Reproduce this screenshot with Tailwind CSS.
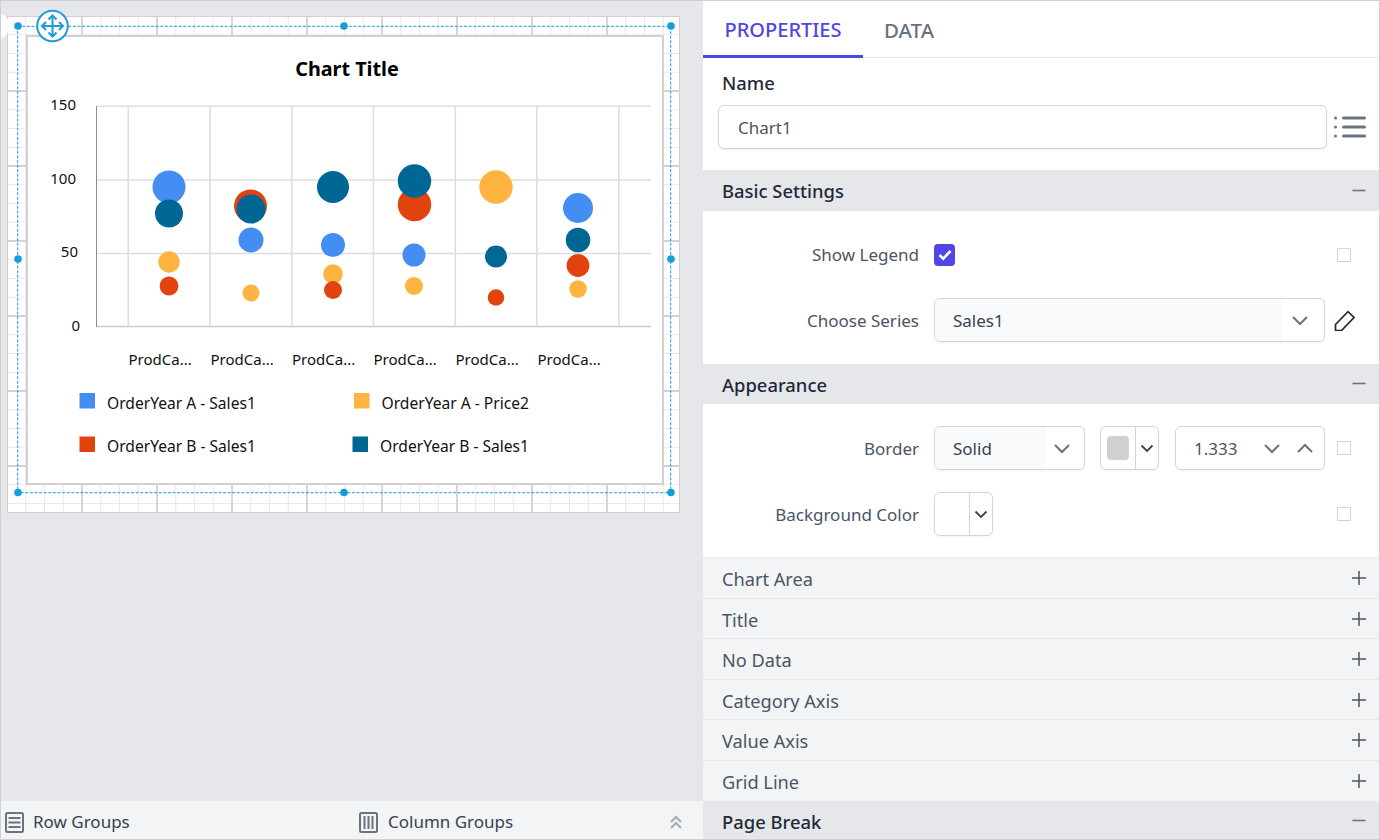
<!DOCTYPE html>
<html lang="en">
<head>
  <meta charset="UTF-8">
  <title>Report Designer - Chart Properties</title>
  <script src="https://cdn.jsdelivr.net/npm/@tailwindcss/browser@4"></script>
</head>
<body class="font-['Noto_Sans',sans-serif] text-[17px] text-gray-800 overflow-hidden">
  <div class="flex w-[1380px] h-[840px] border border-[#cfcfcf] bg-white overflow-hidden">

    <!-- Design surface -->
    <div class="w-[702px] h-full flex flex-col bg-gray-200">
      <div class="flex-1 pt-[15px] pl-[6px]">
        <div class="relative w-[673px] h-[497px] bg-white">
          <svg class="absolute inset-0" width="673" height="497">
            <defs>
              <pattern id="grid" x="-1" y="-1" width="75" height="75" patternUnits="userSpaceOnUse">
                <path d="M19.75 0V75M38.5 0V75M57.25 0V75M0 19.75H75M0 38.5H75M0 57.25H75" stroke="#e9e9e9" stroke-width="1" fill="none"/>
                <path d="M1 0V75M0 1H75" stroke="#d2d2d2" stroke-width="1.8" fill="none"/>
              </pattern>
            </defs>
            <rect width="673" height="497" fill="url(#grid)"/>
            <rect x="0.5" y="0.5" width="672" height="496" fill="none" stroke="#d0d0d0"/>
          </svg>

          <!-- Chart -->
          <div class="absolute left-[19px] top-[19px] w-[638px] h-[450px] border-2 border-[#d1d1d1] bg-white"></div>
          <svg class="absolute inset-0 overflow-visible" width="673" height="497" viewBox="7 16 673 497">
            <g stroke="#dedede" stroke-width="1.6">
              <path d="M96 106.3H651M96 180H651M96 253.5H651"/>
              <path d="M128.3 106V326M210 106V326M291.8 106V326M373.4 106V326M455.3 106V326M536.8 106V326M618.8 106V326"/>
            </g>
            <path d="M96 326.5H651" stroke="#cccccc" stroke-width="1.6"/>
            <path d="M96.5 106V327" stroke="#8c8c8c" stroke-width="1"/>

            <g class="text-[15px]" fill="#111">
              <text x="76" y="110" text-anchor="end">150</text>
              <text x="76" y="184" text-anchor="end">100</text>
              <text x="78" y="257" text-anchor="end">50</text>
              <text x="80" y="331" text-anchor="end">0</text>
            </g>
            <text x="347" y="75.5" text-anchor="middle" class="text-[19.8px] font-bold" fill="#000">Chart Title</text>

            <g fill="#448df3">
              <circle cx="169" cy="187" r="16.5"/>
              <circle cx="251" cy="240" r="12.5"/>
              <circle cx="333" cy="245" r="12"/>
              <circle cx="414" cy="255" r="11.5"/>
              <circle cx="578" cy="208" r="15"/>
            </g>
            <g fill="#ffb340">
              <circle cx="169" cy="262" r="10.7"/>
              <circle cx="251" cy="293" r="8.5"/>
              <circle cx="333" cy="274" r="9.8"/>
              <circle cx="414" cy="286" r="9"/>
              <circle cx="496" cy="187" r="16.7"/>
              <circle cx="578" cy="289" r="8.7"/>
            </g>
            <g fill="#e2420d">
              <circle cx="169" cy="286" r="9.4"/>
              <circle cx="250.5" cy="206" r="16.5"/>
              <circle cx="333" cy="290" r="9"/>
              <circle cx="414.5" cy="204.5" r="16.7"/>
              <circle cx="496" cy="297.5" r="8.3"/>
              <circle cx="578" cy="265.5" r="11.4"/>
            </g>
            <g fill="#006795">
              <circle cx="169" cy="213.5" r="14"/>
              <circle cx="251" cy="209" r="14.5"/>
              <circle cx="333" cy="187" r="16"/>
              <circle cx="414.5" cy="181" r="16.7"/>
              <circle cx="496" cy="256.5" r="11"/>
              <circle cx="578" cy="240" r="12.3"/>
            </g>

            <g class="text-[15px]" fill="#111">
              <text x="128.5" y="365">ProdCa...</text>
              <text x="210.5" y="365">ProdCa...</text>
              <text x="292" y="365">ProdCa...</text>
              <text x="373.5" y="365">ProdCa...</text>
              <text x="455.5" y="365">ProdCa...</text>
              <text x="537.5" y="365">ProdCa...</text>
            </g>

            <rect x="79.5" y="393" width="15.5" height="15.5" fill="#448df3"/>
            <rect x="354" y="393" width="15.5" height="15.5" fill="#ffb340"/>
            <rect x="79.5" y="436.5" width="15.5" height="15.5" fill="#e2420d"/>
            <rect x="352.5" y="436.5" width="15.5" height="15.5" fill="#006795"/>
            <g class="text-[15.6px]" fill="#111">
              <text x="107" y="408.6">OrderYear A - Sales1</text>
              <text x="381.5" y="408.6">OrderYear A - Price2</text>
              <text x="107" y="452">OrderYear B - Sales1</text>
              <text x="380" y="452">OrderYear B - Sales1</text>
            </g>

            <!-- Selection handles -->
            <rect x="17.7" y="26.3" width="653" height="466.4" fill="none" stroke="#149fdc" stroke-width="1" stroke-dasharray="3 1.6"/>
            <g fill="#149fdc">
              <circle cx="18" cy="26" r="3.8"/>
              <circle cx="344" cy="26" r="3.8"/>
              <circle cx="671" cy="26" r="3.8"/>
              <circle cx="18" cy="259" r="3.8"/>
              <circle cx="671" cy="259" r="3.8"/>
              <circle cx="18" cy="492.5" r="3.8"/>
              <circle cx="344" cy="492.5" r="3.8"/>
              <circle cx="671" cy="492.5" r="3.8"/>
            </g>
            <circle cx="52.5" cy="26" r="15.3" fill="#fff" stroke="#1f9bdc" stroke-width="2"/>
            <path d="M52.5 15.5V36.5M42 26H63M48.5 19.5L52.5 15.5L56.5 19.5M48.5 32.5L52.5 36.5L56.5 32.5M46 22L42 26L46 30M59 22L63 26L59 30" fill="none" stroke="#1f9bdc" stroke-width="2"/>
          </svg>
          <div class="absolute left-[-14px] top-[-2px] w-[15px] h-[24px] rounded-full bg-white"></div>
        </div>
      </div>

      <!-- Groups bar -->
      <div class="relative h-[38px] shrink-0 bg-gray-100 flex items-center pt-[4px] text-gray-700">
        <svg class="ml-[4px]" width="19" height="21" viewBox="0 0 19 21" fill="none" stroke="#6b7280">
          <rect x="1" y="1" width="17" height="19" rx="1.5" stroke-width="2"/>
          <path d="M3.5 6H15.5M3.5 10.5H15.5M3.5 15H15.5" stroke-width="2"/>
        </svg>
        <span class="ml-[9px] w-[326px]">Row Groups</span>
        <svg width="19" height="21" viewBox="0 0 19 21" fill="none" stroke="#6b7280">
          <rect x="1" y="1" width="17" height="19" rx="1.5" stroke-width="2"/>
          <path d="M5.5 4V17M9.5 4V17M13.5 4V17" stroke-width="2"/>
        </svg>
        <span class="ml-[10px]">Column Groups</span>
        <svg class="ml-auto mr-[20px]" width="14" height="15" viewBox="0 0 14 15" fill="none" stroke="#a3a9b3" stroke-width="2">
          <path d="M2 7L7 2L12 7M2 13L7 8L12 13"/>
        </svg>
      </div>
    </div>

    <!-- Properties panel -->
    <div class="flex-1 min-w-0 bg-white">
      <div class="flex h-[57px] border-b border-gray-200 text-[20px] font-medium">
        <div class="w-[160px] h-[57px] border-b-[3px] border-[#4f46e5] text-[#4f46e5] flex items-center justify-center pt-[3px]">PROPERTIES</div>
        <div class="ml-[21px] text-gray-500 text-[20.5px] flex items-center pt-[2px]">DATA</div>
      </div>

      <div class="h-[112px] pt-[13px]">
        <div class="pl-[19px] h-[24px] leading-[24px] text-[18.4px] font-medium">Name</div>
        <div class="flex items-center mt-[10px] pl-[15px]">
          <div class="w-[609px] h-[44px] border border-gray-300 rounded-md shadow-xs pl-[19px] pt-[1px] flex items-center text-gray-600">Chart1</div>
          <svg class="ml-[7px]" width="32" height="22" viewBox="0 0 32 22" fill="#6b7280">
            <circle cx="1.5" cy="2" r="1.5"/><circle cx="1.5" cy="11" r="1.5"/><circle cx="1.5" cy="20" r="1.5"/>
            <rect x="8" y="0.5" width="24" height="3" rx="1.5"/><rect x="8" y="9.5" width="24" height="3" rx="1.5"/><rect x="8" y="18.5" width="24" height="3" rx="1.5"/>
          </svg>
        </div>
      </div>

      <!-- Basic Settings -->
      <div class="h-[41px] bg-gray-200 flex items-center justify-between pl-[19px] pr-[13px] text-[18.4px] font-medium">
        <span>Basic Settings</span>
        <svg width="14" height="14" viewBox="0 0 14 14" stroke="#6b7280" stroke-width="1.6"><path d="M0.5 6.5H13.5"/></svg>
      </div>
      <div class="h-[153px] relative">
        <div class="flex items-center h-[22px] absolute top-[33px] left-0 right-0">
          <span class="w-[216px] text-right text-gray-600">Show Legend</span>
          <span class="ml-[15px] w-[21px] h-[22px] rounded-[4px] bg-[#4f46e5] flex items-center justify-center">
            <svg width="14" height="12" viewBox="0 0 14 12" fill="none" stroke="#fff" stroke-width="2.6"><path d="M1.5 6L5.3 9.7L12.5 2"/></svg>
          </span>
          <span class="ml-auto mr-[28px] w-[14px] h-[14px] border border-gray-300"></span>
        </div>
        <div class="flex items-center h-[44px] absolute top-[87px] left-0 right-0">
          <span class="w-[216px] text-right text-gray-600 pt-[2px]">Choose Series</span>
          <div class="ml-[15px] w-[391px] h-[44px] border border-gray-300 rounded-md shadow-xs flex overflow-hidden">
            <div class="w-[347px] bg-gray-50 pl-[18px] pt-[2px] flex items-center text-gray-700">Sales1</div>
            <div class="flex-1 flex items-center justify-center pr-[6px]">
              <svg width="18" height="11" viewBox="0 0 18 11" fill="none" stroke="#6b7280" stroke-width="2"><path d="M2 2L9 9L16 2"/></svg>
            </div>
          </div>
          <svg class="ml-[9px]" width="21" height="21" viewBox="0 0 21 21" fill="none" stroke="#1f2937" stroke-width="1.7">
            <path d="M1.5 14.5L14 1.7L20 7.5L7.5 20.5H1.5Z"/>
          </svg>
        </div>
      </div>

      <!-- Appearance -->
      <div class="h-[40px] bg-gray-200 flex items-center justify-between pl-[19px] pr-[13px] text-[18.4px] font-medium">
        <span class="pt-[2px]">Appearance</span>
        <svg width="14" height="14" viewBox="0 0 14 14" stroke="#6b7280" stroke-width="1.6"><path d="M0.5 6.5H13.5"/></svg>
      </div>
      <div class="h-[154px] border-b border-gray-200 pt-[22px]">
        <div class="flex items-center h-[44px]">
          <span class="w-[216px] text-right text-gray-600 pt-[2px]">Border</span>
          <div class="ml-[15px] w-[151px] h-[44px] border border-gray-300 rounded-md shadow-xs flex overflow-hidden">
            <div class="w-[111px] bg-gray-50 pl-[18px] pt-[2px] flex items-center text-gray-700">Solid</div>
            <div class="flex-1 flex items-center justify-center pr-[6px]">
              <svg width="18" height="11" viewBox="0 0 18 11" fill="none" stroke="#6b7280" stroke-width="2"><path d="M2 2L9 9L16 2"/></svg>
            </div>
          </div>
          <div class="ml-[15px] w-[59px] h-[44px] border border-gray-300 rounded-md shadow-xs flex">
            <div class="w-[35px] border-r border-gray-300 flex items-center justify-center">
              <span class="w-[22px] h-[24px] rounded-[4px] bg-[#d1d1d1]"></span>
            </div>
            <div class="flex-1 flex items-center justify-center">
              <svg width="14" height="9" viewBox="0 0 14 9" fill="none" stroke="#374151" stroke-width="1.8"><path d="M1.5 1.5L7 7L12.5 1.5"/></svg>
            </div>
          </div>
          <div class="ml-[16px] w-[150px] h-[44px] border border-gray-300 rounded-md shadow-xs flex items-center pl-[18px] text-gray-600">
            <span class="pt-[2px]">1.333</span>
            <svg class="ml-auto" width="18" height="11" viewBox="0 0 18 11" fill="none" stroke="#6b7280" stroke-width="2"><path d="M2 2L9 9L16 2"/></svg>
            <svg class="ml-[15px] mr-[10px]" width="18" height="11" viewBox="0 0 18 11" fill="none" stroke="#6b7280" stroke-width="2"><path d="M2 9L9 2L16 9"/></svg>
          </div>
          <span class="ml-auto mr-[28px] w-[14px] h-[14px] border border-gray-300"></span>
        </div>
        <div class="flex items-center h-[44px] mt-[22px]">
          <span class="w-[216px] text-right text-gray-600 pt-[2px]">Background Color</span>
          <div class="ml-[15px] w-[59px] h-[44px] border border-gray-300 rounded-md shadow-xs flex">
            <div class="w-[35px] border-r border-gray-300"></div>
            <div class="flex-1 flex items-center justify-center">
              <svg width="14" height="9" viewBox="0 0 14 9" fill="none" stroke="#374151" stroke-width="1.8"><path d="M1.5 1.5L7 7L12.5 1.5"/></svg>
            </div>
          </div>
          <span class="ml-auto mr-[28px] w-[14px] h-[14px] border border-gray-300"></span>
        </div>
      </div>

      <!-- Collapsed sections -->
      <div class="h-[41px] bg-gray-100 border-b border-gray-200 flex items-center justify-between pl-[19px] pr-[12.5px] text-[18.2px] text-gray-600">
        <span class="pt-[4px]">Chart Area</span>
        <svg width="16" height="16" viewBox="0 0 16 16" stroke="#4b5563" stroke-width="1.5"><path d="M1 8H15M8 1V15"/></svg>
      </div>
      <div class="h-[40px] bg-gray-100 border-b border-gray-200 flex items-center justify-between pl-[19px] pr-[12.5px] text-[18.2px] text-gray-600">
        <span class="pt-[4px]">Title</span>
        <svg width="16" height="16" viewBox="0 0 16 16" stroke="#4b5563" stroke-width="1.5"><path d="M1 8H15M8 1V15"/></svg>
      </div>
      <div class="h-[41px] bg-gray-100 border-b border-gray-200 flex items-center justify-between pl-[19px] pr-[12.5px] text-[18.2px] text-gray-600">
        <span class="pt-[4px]">No Data</span>
        <svg width="16" height="16" viewBox="0 0 16 16" stroke="#4b5563" stroke-width="1.5"><path d="M1 8H15M8 1V15"/></svg>
      </div>
      <div class="h-[40px] bg-gray-100 border-b border-gray-200 flex items-center justify-between pl-[19px] pr-[12.5px] text-[18.2px] text-gray-600">
        <span class="pt-[4px]">Category Axis</span>
        <svg width="16" height="16" viewBox="0 0 16 16" stroke="#4b5563" stroke-width="1.5"><path d="M1 8H15M8 1V15"/></svg>
      </div>
      <div class="h-[41px] bg-gray-100 border-b border-gray-200 flex items-center justify-between pl-[19px] pr-[12.5px] text-[18.2px] text-gray-600">
        <span class="pt-[4px]">Value Axis</span>
        <svg width="16" height="16" viewBox="0 0 16 16" stroke="#4b5563" stroke-width="1.5"><path d="M1 8H15M8 1V15"/></svg>
      </div>
      <div class="h-[40px] bg-gray-100 flex items-center justify-between pl-[19px] pr-[12.5px] text-[18.2px] text-gray-600">
        <span class="pt-[4px]">Grid Line</span>
        <svg width="16" height="16" viewBox="0 0 16 16" stroke="#4b5563" stroke-width="1.5"><path d="M1 8H15M8 1V15"/></svg>
      </div>
      <div class="h-[38px] bg-gray-200 flex items-center justify-between pl-[19px] pr-[13px] text-[18.4px] font-medium">
        <span class="pt-[4px]">Page Break</span>
        <svg class="mt-[2px]" width="14" height="14" viewBox="0 0 14 14" stroke="#6b7280" stroke-width="1.6"><path d="M0.5 6.5H13.5"/></svg>
      </div>
    </div>
  </div>
</body>
</html>
